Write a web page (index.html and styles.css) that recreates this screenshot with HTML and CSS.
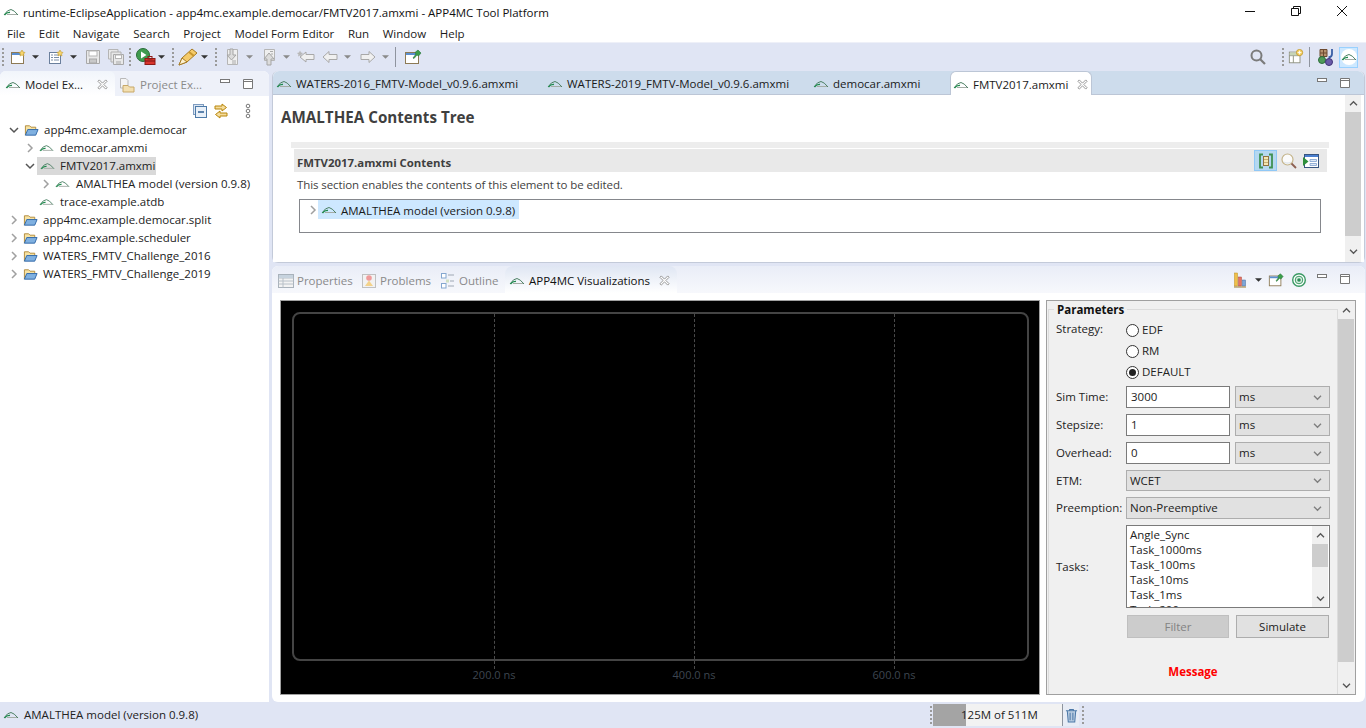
FILE: index.html
```html
<!DOCTYPE html>
<html lang="en">
<head>
<meta charset="utf-8">
<title>APP4MC Tool Platform</title>
<link rel="stylesheet" href="styles.css">
</head>
<body>
<svg class="defs" width="0" height="0" aria-hidden="true">
  <symbol id="amalthea" viewBox="0 0 16 16">
    <path d="M1 11 Q4.500 5.500 8 5.500 Q11 6 15 11" fill="none" stroke="#4c8064" stroke-width="1"/>
    <path d="M1.500 11 Q4 8 7 8.500" fill="none" stroke="#1f8a4d" stroke-width="1.300"/>
    <path d="M4 10.500 H14" stroke="#a4aca6" stroke-width="1"/>
  </symbol>
  <symbol id="folder" viewBox="0 0 16 16">
    <path d="M1.500 13.500 V3.500 H6 L7.500 5 H12.500 V7" fill="#f7e3a3" stroke="#b08a3c"/>
    <path d="M1.500 13.500 L4 7.500 H15 L12.500 13.500 Z" fill="#7fb0e0" stroke="#2f66a8"/>
  </symbol>
  <symbol id="close" viewBox="0 0 12 12">
    <path d="M2.500 1 L6 4.500 L9.500 1 L11 2.500 L7.500 6 L11 9.500 L9.500 11 L6 7.500 L2.500 11 L1 9.500 L4.500 6 L1 2.500 Z" fill="#fff" stroke="#8f8f8f" stroke-width="1"/>
  </symbol>
  <symbol id="chev-r" viewBox="0 0 8 10">
    <path d="M2 1 L6 5 L2 9" fill="none" stroke="#a0a0a0" stroke-width="1.500"/>
  </symbol>
  <symbol id="chev-d" viewBox="0 0 10 8">
    <path d="M1 2 L5 6 L9 2" fill="none" stroke="#555" stroke-width="1.500"/>
  </symbol>
  <symbol id="drop" viewBox="0 0 8 4">
    <path d="M0 0 H8 L4 4 Z" fill="#333"/>
  </symbol>
  <symbol id="drop-g" viewBox="0 0 8 4">
    <path d="M0 0 H8 L4 4 Z" fill="#8a8a8a"/>
  </symbol>
  <symbol id="min" viewBox="0 0 12 12"><rect x="1.500" y="1.500" width="9" height="3" fill="#fff" stroke="#777"/></symbol>
  <symbol id="max" viewBox="0 0 12 12"><path d="M1.500 1.500 H10.500 V10.500 H1.500 Z M1.500 3.500 H10.500" fill="#fff" stroke="#777"/></symbol>
  <symbol id="newwin" viewBox="0 0 16 16">
    <rect x="1.500" y="3.500" width="12" height="11" fill="#fff" stroke="#8d7a55"/><rect x="2" y="4" width="11" height="2" fill="#5b8fd0"/>
    <path d="M12 1 L13 3 L15 3.500 L13.500 5 L14 7 L12 6 L10 7 L10.500 5 L9 3.500 L11 3 Z" fill="#f7d56c" stroke="#c39a2c" stroke-width=".6"/>
  </symbol>
  <symbol id="newfile" viewBox="0 0 16 16">
    <rect x="1.500" y="3.500" width="11" height="11" fill="#fff" stroke="#6a7f9c"/><path d="M3 6 H5 M6 6 H11 M3 8.500 H5 M6 8.500 H11 M3 11 H5 M6 11 H11" stroke="#7a8ea8"/>
    <path d="M12 1 L13 3 L15 3.500 L13.500 5 L14 7 L12 6 L10 7 L10.500 5 L9 3.500 L11 3 Z" fill="#f7d56c" stroke="#c39a2c" stroke-width=".6"/>
  </symbol>
  <symbol id="save" viewBox="0 0 16 16">
    <path d="M1.500 1.500 H14.500 V14.500 H1.500 Z" fill="#e8e8e8" stroke="#a8a8a8"/><rect x="4" y="2" width="8" height="5" fill="#fff" stroke="#b5b5b5"/><rect x="4.500" y="10" width="7" height="4" fill="#c8c8c8" stroke="#a8a8a8"/>
  </symbol>
  <symbol id="saveall" viewBox="0 0 16 16">
    <path d="M.5 .5 H10 V10 H.5 Z" fill="#e8e8e8" stroke="#b5b5b5"/><path d="M3 3 H13 V13 H3 Z" fill="#e8e8e8" stroke="#b0b0b0"/><path d="M5.500 5.500 H15.500 V15.500 H5.500 Z" fill="#e8e8e8" stroke="#a8a8a8"/><rect x="7.500" y="6" width="6" height="3.500" fill="#fff" stroke="#b5b5b5"/><rect x="8" y="12" width="5" height="3" fill="#c8c8c8"/>
  </symbol>
  <symbol id="run" viewBox="0 0 20 18">
    <circle cx="7" cy="7" r="6.500" fill="#3f9b4f" stroke="#2c6d3a"/><path d="M5 3.500 L10.500 7 L5 10.500 Z" fill="#fff"/>
    <rect x="9" y="10.500" width="10" height="6" fill="#d8342c" stroke="#8e1a16"/><rect x="12" y="8.500" width="4" height="2.500" fill="none" stroke="#8e1a16"/><path d="M9 13 H19" stroke="#7c1512"/>
  </symbol>
  <symbol id="pen" viewBox="0 0 20 18">
    <path d="M1 17 L4 10 L14 1 L19 5 L9 14 Z" fill="#f5cb6a" stroke="#a67b25"/><path d="M1 17 L4 10 L9 14 Z" fill="#fdf1cf" stroke="#a67b25"/><path d="M11 4 L16 8" stroke="#c9972e" stroke-width="2"/>
  </symbol>
  <symbol id="nextann" viewBox="0 0 16 18">
    <path d="M3.500 1.500 H13.500 V16.500 H3.500 Z" fill="#efefef" stroke="#b5b5b5"/><path d="M6 1 H9 V7 H12 L7.500 12 L3 7 H6 Z" fill="#dcdcdc" stroke="#a5a5a5"/><path d="M8 13 H12 M8 15 H12" stroke="#aaa"/>
  </symbol>
  <symbol id="prevann" viewBox="0 0 16 18">
    <path d="M3.500 1.500 H13.500 V12.500 H3.500 Z" fill="#efefef" stroke="#b5b5b5"/><path d="M6 17 H10 V11 H13 L8 5 L3 11 H6 Z" fill="#dcdcdc" stroke="#a5a5a5"/><path d="M9 3.500 H12 M10 6 H12" stroke="#aaa"/>
  </symbol>
  <symbol id="arrow-l" viewBox="0 0 16 14">
    <path d="M1 7 L7 1.500 V4.500 H15 V9.500 H7 V12.500 Z" fill="#f0f0f0" stroke="#a8a8a8"/>
  </symbol>
  <symbol id="arrow-r" viewBox="0 0 16 14">
    <path d="M15 7 L9 1.500 V4.500 H1 V9.500 H9 V12.500 Z" fill="#f0f0f0" stroke="#a8a8a8"/>
  </symbol>
  <symbol id="lastedit" viewBox="0 0 18 14">
    <path d="M3 7 L9 2 V4.500 H17 V9.500 H9 V12 Z" fill="#f0f0f0" stroke="#a8a8a8"/><path d="M3 .5 L4 2.500 L6 3 L4.500 4.500 L5 6.500 L3 5.500 L1 6.500 L1.500 4.500 L0 3 L2 2.500 Z" fill="#b8b8b8"/>
  </symbol>
  <symbol id="pin" viewBox="0 0 18 16">
    <rect x="1.500" y="3.500" width="13" height="11" fill="#fff" stroke="#8d7a55"/><rect x="2" y="4" width="12" height="2" fill="#5b8fd0"/>
    <path d="M9 9 L12 5 L11 3.500 L14 1 L17 4 L14.500 7 L13 6 L10 9.500 Z" fill="#3b9e4a" stroke="#27733a" stroke-width=".6"/>
  </symbol>
  <symbol id="search" viewBox="0 0 16 16">
    <circle cx="6.500" cy="6.500" r="5" fill="none" stroke="#7b7b7b" stroke-width="2"/><path d="M10 10 L15 15" stroke="#7b7b7b" stroke-width="2.200"/>
  </symbol>
  <symbol id="persp" viewBox="0 0 18 18">
    <rect x="1.500" y="3.500" width="12" height="12" fill="#fff" stroke="#8a8d7b"/><path d="M1.500 7.500 H13.500 M6 7.500 V15.500" stroke="#8a8d7b"/><rect x="2" y="4" width="11" height="3" fill="#c6d4b6"/>
    <circle cx="13" cy="4" r="3.500" fill="#f7d56c" stroke="#c39a2c"/><path d="M11 4 H15 M13 2 V6" stroke="#fff"/>
  </symbol>
  <symbol id="java" viewBox="0 0 18 18">
    <path d="M2 1.500 H9 V8.500 H2 Z M2 5 H9 M5.500 1.500 V8.500" fill="#b6926e" stroke="#6d4a30"/>
    <path d="M14 1 V6 Q14 9 10.500 9.500" fill="none" stroke="#3a5ea6" stroke-width="1.800"/>
    <circle cx="4" cy="12" r="3.500" fill="#4f9a59" stroke="#2c6d3a"/><circle cx="11" cy="14" r="3.500" fill="#6a5aa8" stroke="#403375"/>
  </symbol>
  <symbol id="collapse" viewBox="0 0 16 16">
    <rect x="1.500" y="1.500" width="10" height="10" fill="#dce6f2" stroke="#7e9cc0"/><rect x="3.500" y="3.500" width="11" height="11" fill="#e9f0f8" stroke="#4d7aa8"/><path d="M6 9 H12" stroke="#2d5f94" stroke-width="1.500"/>
  </symbol>
  <symbol id="link" viewBox="0 0 16 16">
    <path d="M9 1 L13.500 4.500 L9 8 V6 H2 V3 H9 Z" fill="#f5dc9c" stroke="#b8860b"/><path d="M7 8 L2.500 11.500 L7 15 V13 H14 V10 H7 Z" fill="#f5dc9c" stroke="#b8860b"/>
  </symbol>
  <symbol id="vdots" viewBox="0 0 6 16">
    <circle cx="3" cy="3" r="1.800" fill="#fff" stroke="#777"/><circle cx="3" cy="8" r="1.800" fill="#fff" stroke="#777"/><circle cx="3" cy="13" r="1.800" fill="#fff" stroke="#777"/>
  </symbol>
  <symbol id="pexp" viewBox="0 0 16 16">
    <path d="M1.500 1.500 H7 L9 3.500 V11 H1.500 Z" fill="#f4f4f4" stroke="#b9b9b9"/><path d="M4 8.500 H9 L10.500 10 H15 V15 H4 Z" fill="#f3dfb0" stroke="#c7a868"/>
  </symbol>
  <symbol id="props" viewBox="0 0 16 14">
    <rect x=".5" y=".5" width="15" height="13" fill="#f3f3f3" stroke="#a9b2bb"/><path d="M.5 4 H15.500 M.5 7 H15.500 M.5 10 H15.500 M5 4 V13.500" stroke="#b8c0c8"/><rect x="1" y="1" width="14" height="3" fill="#c7d3de"/>
  </symbol>
  <symbol id="problems" viewBox="0 0 16 16">
    <rect x="1.500" y="1.500" width="13" height="13" fill="#f2f2f2" stroke="#c0c0c0"/><circle cx="8" cy="5" r="2.800" fill="#ef9a9a"/><path d="M4 13 L8 7.500 L12 13 Z" fill="#f3d28a"/>
  </symbol>
  <symbol id="outline" viewBox="0 0 14 16">
    <rect x=".5" y=".5" width="4.500" height="4.500" fill="#fff" stroke="#84a7cf"/><rect x=".5" y="10.500" width="4.500" height="4.500" fill="#fff" stroke="#84a7cf"/><path d="M7 2 H13 M9 8 H13 M7 13 H13" stroke="#9fa8b4"/><rect x="5" y="6.500" width="3" height="3" fill="#cfe0c2"/>
  </symbol>
  <symbol id="chart" viewBox="0 0 13 16">
    <rect x=".5" y="1" width="3" height="13" fill="#f0c04a" stroke="#b98d1f" stroke-width=".5"/><rect x="4.500" y="5" width="3" height="9" fill="#e57364" stroke="#a9483c" stroke-width=".5"/><rect x="8.500" y="8" width="3" height="6" fill="#7ea6d8" stroke="#44689a" stroke-width=".5"/><path d="M0 15 H12" stroke="#9a7a30"/>
  </symbol>
  <symbol id="target" viewBox="0 0 14 14">
    <circle cx="7" cy="7" r="6.300" fill="#fff" stroke="#3a9a64" stroke-width="1.400"/><circle cx="7" cy="7" r="3.800" fill="#d6efdf" stroke="#3a9a64"/><circle cx="7" cy="7" r="1.800" fill="#2e8b57"/>
  </symbol>
  <symbol id="bracket" viewBox="0 0 16 16">
    <path d="M5 1.500 H2 V14.500 H5 M11 1.500 H14 V14.500 H11" fill="none" stroke="#3f9152" stroke-width="1.800"/><rect x="5.500" y="3.500" width="5" height="9" fill="#f4e6b0" stroke="#8d7340"/><path d="M6 6.500 H10 M6 9.500 H10" stroke="#c3b078"/>
  </symbol>
  <symbol id="glass" viewBox="0 0 16 16">
    <circle cx="6.500" cy="6.500" r="5.500" fill="#fbfbfb" stroke="#c4b48a" stroke-width="1.200"/><path d="M2 8 Q6.500 11 11 8 A5 5 0 0 1 2 8" fill="#dbe2e8"/><path d="M10.500 10.500 L15 15" stroke="#8c5f50" stroke-width="1.800"/>
  </symbol>
  <symbol id="viewform" viewBox="0 0 16 16">
    <rect x="1.500" y="1.500" width="14" height="13" fill="#fff" stroke="#38557f"/><rect x="2" y="2" width="13" height="2" fill="#4a7fd0"/><path d="M7 6.500 H13.500 V8.500 H7 Z M7 10.500 H13.500 V12.500 H7 Z" fill="#dfe9f6" stroke="#7d9fce" stroke-width=".8"/><path d="M0 4 L5.500 8.500 L0 13 Z" fill="#2f8f3a"/>
  </symbol>
  <symbol id="trash" viewBox="0 0 14 16">
    <path d="M1 3 H13 M5 3 V1.500 H9 V3 M2.500 3.500 L3.500 15 H10.500 L11.500 3.500 M5.500 5 V13 M8.500 5 V13" fill="#b8cbe0" stroke="#4b78a8" stroke-width="1.100"/>
  </symbol>
</svg>

<div class="window">
  <header class="titlebar">
    <svg class="ic16 title-ic"><use href="#amalthea"/></svg>
    <span class="title-text">runtime-EclipseApplication - app4mc.example.democar/FMTV2017.amxmi - APP4MC Tool Platform</span>
    <div class="winctl">
      <svg class="wc" viewBox="0 0 12 12"><path d="M1 6.500 H11" stroke="#111"/></svg>
      <svg class="wc" viewBox="0 0 12 12"><path d="M1.500 3.500 H8.500 V10.500 H1.500 Z M3.500 3.500 V1.500 H10.500 V8.500 H8.500" fill="none" stroke="#111"/></svg>
      <svg class="wc" viewBox="0 0 12 12"><path d="M1 1 L11 11 M11 1 L1 11" stroke="#111"/></svg>
    </div>
  </header>

  <nav class="menubar">
    <span>File</span><span>Edit</span><span>Navigate</span><span>Search</span><span>Project</span><span>Model Form Editor</span><span>Run</span><span>Window</span><span>Help</span>
  </nav>

  <div class="toolbar">
    <i class="grip g1"></i>
    <svg class="ti i-new"><use href="#newwin"/></svg><svg class="dd d1"><use href="#drop"/></svg>
    <svg class="ti i-file"><use href="#newfile"/></svg><svg class="dd d1"><use href="#drop"/></svg>
    <svg class="ti i-save"><use href="#save"/></svg>
    <svg class="ti i-saveall"><use href="#saveall"/></svg>
    <i class="grip g2"></i>
    <svg class="ti i-run"><use href="#run"/></svg><svg class="dd d2"><use href="#drop"/></svg>
    <i class="grip g3"></i>
    <svg class="ti i-pen"><use href="#pen"/></svg><svg class="dd d3"><use href="#drop"/></svg>
    <i class="grip g3"></i>
    <svg class="ti i-next"><use href="#nextann"/></svg><svg class="dd d4"><use href="#drop-g"/></svg>
    <svg class="ti i-prev"><use href="#prevann"/></svg><svg class="dd d4"><use href="#drop-g"/></svg>
    <svg class="ti i-last"><use href="#lastedit"/></svg>
    <svg class="ti i-back"><use href="#arrow-l"/></svg><svg class="dd d4"><use href="#drop-g"/></svg>
    <svg class="ti i-fwd"><use href="#arrow-r"/></svg><svg class="dd d4"><use href="#drop-g"/></svg>
    <i class="vsep s1"></i>
    <svg class="ti i-pin"><use href="#pin"/></svg>
    <div class="tb-right">
      <svg class="ti r-search"><use href="#search"/></svg>
      <i class="grip g4"></i>
      <svg class="ti r-persp"><use href="#persp"/></svg>
      <i class="vsep s2"></i>
      <svg class="ti r-java"><use href="#java"/></svg>
      <span class="persp-on"><svg class="ic16"><use href="#amalthea"/></svg></span>
    </div>
  </div>

  <main class="workbench">
    <section class="part left">
      <div class="tabs tabs-left">
        <div class="tab active mx"><svg class="ic16"><use href="#amalthea"/></svg><span>Model Ex...</span><svg class="x"><use href="#close"/></svg></div>
        <div class="tab off px"><svg class="ic16"><use href="#pexp"/></svg><span>Project Ex...</span></div>
        <div class="part-ctl"><svg class="pc"><use href="#min"/></svg><svg class="pc"><use href="#max"/></svg></div>
      </div>
      <div class="part-body">
        <div class="view-tools">
          <svg class="ic16"><use href="#collapse"/></svg>
          <svg class="ic16"><use href="#link"/></svg>
          <svg class="vd"><use href="#vdots"/></svg>
        </div>
        <ul class="tree">
          <li class="row l1"><svg class="cd"><use href="#chev-d"/></svg><svg class="ic-f"><use href="#folder"/></svg><span>app4mc.example.democar</span></li>
          <li class="row l2"><svg class="cr"><use href="#chev-r"/></svg><svg class="ic-f"><use href="#amalthea"/></svg><span>democar.amxmi</span></li>
          <li class="row l2"><svg class="cd"><use href="#chev-d"/></svg><span class="sel"><svg class="ic-f"><use href="#amalthea"/></svg><span>FMTV2017.amxmi</span></span></li>
          <li class="row l3"><svg class="cr"><use href="#chev-r"/></svg><svg class="ic-f"><use href="#amalthea"/></svg><span>AMALTHEA model (version 0.9.8)</span></li>
          <li class="row l2"><i class="nochev"></i><svg class="ic-f"><use href="#amalthea"/></svg><span>trace-example.atdb</span></li>
          <li class="row l1"><svg class="cr"><use href="#chev-r"/></svg><svg class="ic-f"><use href="#folder"/></svg><span>app4mc.example.democar.split</span></li>
          <li class="row l1"><svg class="cr"><use href="#chev-r"/></svg><svg class="ic-f"><use href="#folder"/></svg><span>app4mc.example.scheduler</span></li>
          <li class="row l1"><svg class="cr"><use href="#chev-r"/></svg><svg class="ic-f"><use href="#folder"/></svg><span>WATERS_FMTV_Challenge_2016</span></li>
          <li class="row l1"><svg class="cr"><use href="#chev-r"/></svg><svg class="ic-f"><use href="#folder"/></svg><span>WATERS_FMTV_Challenge_2019</span></li>
        </ul>
      </div>
    </section>

    <div class="right">
      <section class="part editor">
        <div class="tabs tabs-ed">
          <div class="tab et1"><svg class="ic16"><use href="#amalthea"/></svg><span>WATERS-2016_FMTV-Model_v0.9.6.amxmi</span></div>
          <div class="tab et2"><svg class="ic16"><use href="#amalthea"/></svg><span>WATERS-2019_FMTV-Model_v0.9.6.amxmi</span></div>
          <div class="tab et3"><svg class="ic16"><use href="#amalthea"/></svg><span>democar.amxmi</span></div>
          <div class="tab active et4"><svg class="ic16"><use href="#amalthea"/></svg><span>FMTV2017.amxmi</span><svg class="x"><use href="#close"/></svg></div>
          <div class="part-ctl"><svg class="pc"><use href="#min"/></svg><svg class="pc"><use href="#max"/></svg></div>
        </div>
        <div class="ed-body">
          <div class="form">
            <h1 class="form-title">AMALTHEA Contents Tree</h1>
            <div class="section">
              <div class="sec-strip"></div>
              <div class="sec-head">
                <span class="sec-title">FMTV2017.amxmi Contents</span>
                <div class="sec-tools">
                  <span class="tool-on"><svg class="ic16"><use href="#bracket"/></svg></span>
                  <svg class="ic16"><use href="#glass"/></svg>
                  <svg class="ic16"><use href="#viewform"/></svg>
                </div>
              </div>
              <p class="sec-desc">This section enables the contents of this element to be edited.</p>
              <div class="tree-box">
                <svg class="cr"><use href="#chev-r"/></svg>
                <span class="sel-blue"><svg class="ic16"><use href="#amalthea"/></svg><span class="sel-label">AMALTHEA model (version 0.9.8)</span></span>
              </div>
            </div>
          </div>
          <div class="sb sb-ed">
            <span class="sb-btn"><svg class="sb-ch up"><use href="#chev-d"/></svg></span>
            <span class="sb-thumb"></span>
            <span class="sb-btn"><svg class="sb-ch"><use href="#chev-d"/></svg></span>
          </div>
        </div>
      </section>

      <section class="part viz">
        <div class="tabs tabs-viz">
          <div class="tab off vt1"><svg class="ic16"><use href="#props"/></svg><span>Properties</span></div>
          <div class="tab off vt2"><svg class="ic16"><use href="#problems"/></svg><span>Problems</span></div>
          <div class="tab off vt3"><svg class="ic16"><use href="#outline"/></svg><span>Outline</span></div>
          <div class="tab active vt4"><svg class="ic16"><use href="#amalthea"/></svg><span>APP4MC Visualizations</span><svg class="x"><use href="#close"/></svg></div>
          <div class="viz-tools">
            <svg class="v-chart"><use href="#chart"/></svg><svg class="dd d8"><use href="#drop"/></svg>
            <svg class="ic16 vt-pin"><use href="#pin"/></svg>
            <svg class="ic16 vt-tg"><use href="#target"/></svg>
            <svg class="pc"><use href="#min"/></svg><svg class="pc"><use href="#max"/></svg>
          </div>
        </div>
        <div class="viz-body">
          <div class="chart">
            <div class="plot">
              <i class="gridline"></i><i class="gridline"></i><i class="gridline"></i>
            </div>
            <div class="axis"><span>200.0 ns</span><span>400.0 ns</span><span>600.0 ns</span></div>
          </div>
          <div class="params">
            <div class="group">
              <div class="legend"><span>Parameters</span></div>
              <div class="p-grid">
                <span class="lab lab-s">Strategy:</span>
                <div class="radios">
                  <label class="radio"><i class="dot"></i>EDF</label>
                  <label class="radio"><i class="dot"></i>RM</label>
                  <label class="radio"><i class="dot on"></i>DEFAULT</label>
                </div>
                <span class="lab">Sim Time:</span><div class="pair"><span class="inp">3000</span><span class="combo">ms<svg class="cchev"><use href="#chev-d"/></svg></span></div>
                <span class="lab">Stepsize:</span><div class="pair"><span class="inp">1</span><span class="combo">ms<svg class="cchev"><use href="#chev-d"/></svg></span></div>
                <span class="lab">Overhead:</span><div class="pair"><span class="inp">0</span><span class="combo">ms<svg class="cchev"><use href="#chev-d"/></svg></span></div>
                <span class="lab">ETM:</span><span class="combo c-etm">WCET<svg class="cchev"><use href="#chev-d"/></svg></span>
                <span class="lab">Preemption:</span><span class="combo">Non-Preemptive<svg class="cchev"><use href="#chev-d"/></svg></span>
                <span class="lab">Tasks:</span>
                <div class="list">
                  <div class="list-items"><div>Angle_Sync</div><div>Task_1000ms</div><div>Task_100ms</div><div>Task_10ms</div><div>Task_1ms</div><div>Task_200ms</div></div>
                  <div class="sb sb-list">
                    <span class="sb-btn"><svg class="sb-ch up"><use href="#chev-d"/></svg></span>
                    <span class="sb-thumb"></span>
                    <span class="sb-btn"><svg class="sb-ch"><use href="#chev-d"/></svg></span>
                  </div>
                </div>
                <span></span>
                <div class="btns"><span class="btn dis">Filter</span><span class="btn">Simulate</span></div>
              </div>
              <div class="message">Message</div>
            </div>
            <div class="sb sb-par">
              <span class="sb-btn"><svg class="sb-ch up"><use href="#chev-d"/></svg></span>
              <span class="sb-thumb"></span>
              <span class="sb-btn"><svg class="sb-ch"><use href="#chev-d"/></svg></span>
            </div>
          </div>
        </div>
      </section>
    </div>
  </main>

  <footer class="status">
    <svg class="ic16"><use href="#amalthea"/></svg>
    <span class="st-text">AMALTHEA model (version 0.9.8)</span>
    <div class="st-right">
      <i class="grip g5"></i>
      <div class="heap"><div class="heap-used"></div><span class="heap-label">125M of 511M</span></div>
      <span class="gc"><svg class="tr"><use href="#trash"/></svg></span>
      <i class="grip g5 g6"></i>
    </div>
  </footer>
</div>
</body>
</html>
```
FILE: styles.css
```css
* { box-sizing: border-box; }
html, body { margin: 0; height: 100%; }
body { font: 11.500px/16px "Open Sans", "Liberation Sans", sans-serif; color: #1a1a1a; background: #e0e5f4; overflow: hidden; }
.defs { position: absolute; }
svg { display: block; flex: none; }
.window { width: 1366px; height: 728px; display: flex; flex-direction: column; }
.ic16 { width: 16px; height: 16px; }

.titlebar { height: 23px; background: #fff; display: flex; align-items: center; padding-left: 3px; }
.title-ic { margin-right: 4px; margin-top: 2px; }
.title-text { color: #111; padding-top: 3px; }
.winctl { margin-left: auto; display: flex; align-items: center; padding-right: 18px; gap: 34px; }
.wc { width: 12px; height: 12px; }

.menubar { height: 19px; background: #fff; display: flex; padding: 3px 0 0 7px; gap: 13.600px; align-items: center; }

.toolbar { height: 30px; display: flex; align-items: center; background: #e0e5f4; border-top: 1px solid #eef0f8; padding-right: 8px; }
.grip { width: 2px; height: 18px; background-image: linear-gradient(#9a9a9a 50%, transparent 50%); background-size: 2px 4px; flex: none; }
.g1 { margin-left: 2px; }
.g2 { margin-left: 5px; }
.g3 { margin-left: 7px; }
.ti { width: 16px; height: 16px; }
.dd { width: 7px; height: 4px; }
.i-new { margin-left: 6px; }
.d1 { margin-left: 6px; }
.i-file { margin-left: 9px; }
.i-save { margin-left: 8px; }
.i-saveall { margin-left: 7px; }
.i-run { margin-left: 5px; width: 20px; height: 18px; }
.d2 { margin-left: 2px; }
.i-pen { margin-left: 4px; width: 20px; height: 18px; }
.d3 { margin-left: 3px; }
.i-next { margin-left: 7px; height: 18px; }
.d4 { margin-left: 6px; }
.i-prev { margin-left: 8px; height: 18px; }
.i-last { margin-left: 7px; width: 18px; height: 14px; }
.i-back { margin-left: 7px; height: 14px; }
.i-fwd { margin-left: 9px; height: 14px; }
.vsep { width: 1px; height: 20px; background: #8f949f; flex: none; }
.s1 { margin-left: 6px; }
.i-pin { margin-left: 8px; width: 18px; }
.tb-right { margin-left: auto; display: flex; align-items: center; }
.r-search { margin-right: 16px; }
.g4 { margin-right: 4px; }
.s2 { margin: 0 8px 0 5px; }
.r-java { width: 18px; height: 18px; margin-right: 3px; }
.persp-on { width: 19px; height: 21px; background: #cde8ff; border: 1px solid #99d1ff; display: flex; align-items: center; justify-content: center; }
.persp-on .ic16 { background: #fff; border-radius: 50%; }

.workbench { height: 631px; display: grid; grid-template-columns: 269px 1fr; column-gap: 3px; padding-right: 1px; }
.part { display: flex; flex-direction: column; min-height: 0; min-width: 0; }
.tabs { height: 25px; display: flex; align-items: stretch; flex: none; }
.tab { display: flex; align-items: center; white-space: nowrap; padding-top: 2px; }
.tab.off { color: #8a8a8a; }
.tab.active { background: linear-gradient(#f1f5fb, #fff); border-radius: 6px 6px 0 0; }
.x { width: 11px; height: 11px; }
.part-ctl { margin-left: auto; display: flex; align-items: center; gap: 11px; padding: 1px 13px 0 0; }
.pc { width: 12px; height: 12px; }

.left { background: #fff; border-radius: 6px 6px 0 0; }
.tabs-left { background: #eef1f9; border-radius: 6px 6px 0 0; }
.tabs-left .part-ctl { padding-right: 15px; }
.mx { width: 115px; padding-left: 5px; gap: 4px; }
.mx .x { margin-left: auto; margin-right: 7px; }
.px { padding-left: 4px; gap: 5px; }
.part-body { flex: 1; background: #fff; padding-top: 5px; }
.view-tools { height: 20px; display: flex; align-items: center; padding-left: 192px; gap: 5px; }
.vd { width: 6px; height: 16px; margin-left: 11px; }
.tree { list-style: none; margin: 0; padding: 0; }
.row { height: 18px; display: flex; align-items: center; white-space: nowrap; color: #222; }
.l1 { padding-left: 9px; }
.l2 { padding-left: 25px; }
.l3 { padding-left: 41px; }
.cr { width: 8px; height: 10px; margin-left: 1px; margin-right: 5px; }
.cd { width: 10px; height: 8px; margin-right: 5px; }
.nochev { width: 14px; flex: none; }
.row .ic-f { width: 15px; height: 16px; margin-right: 5px; }
.l2 .ic-f, .l3 .ic-f { margin-right: 6px; }
.row .sel .ic-f { margin-right: 5px; }
.sel { display: flex; align-items: center; background: #d9d9d9; height: 18px; margin-left: -3px; padding: 0 1px 0 3px; }

.right { display: grid; grid-template-rows: 192px 436px; row-gap: 3px; min-width: 0; }
.editor { background: #fff; border: 1px solid #c3cad9; border-top: 0; border-radius: 6px; }
.tabs-ed { height: 24px; background: #cddcec; border-radius: 6px 6px 0 0; border-bottom: 1px solid #bcc6d6; }
.et1 { width: 271px; padding-left: 3px; gap: 4px; }
.et2 { width: 266px; padding-left: 3px; gap: 4px; }
.et3 { width: 140px; padding-left: 3px; gap: 4px; }
.tab.et4 { width: 142px; padding-left: 2px; gap: 4px; border: 1px solid #bcc6d6; border-bottom: 0; background: #fff; height: 24px; }
.et4 .x { margin-left: 5px; }
.ed-body { flex: 1; display: flex; min-height: 0; background: #fff; }
.form { flex: 1; min-width: 0; padding: 11px 16px 0 8px; }
.form-title { margin: 0; font-size: 15.200px; line-height: 22px; font-weight: 700; color: #3f3f3f; }
.section { margin-top: 14px; margin-left: 10px; }
.sec-strip { height: 6px; background: #ededed; }
.sec-head { height: 23px; margin: 1px 2px 0 3px; background: #e9e9e9; display: flex; align-items: center; padding-left: 3px; }
.sec-title { font-weight: 700; font-size: 11.400px; color: #3f3f3f; padding-top: 5px; }
.sec-tools { margin-left: auto; display: flex; align-items: center; gap: 6px; padding-right: 8px; }
.tool-on { width: 23px; height: 21px; background: #b5d8f0; border: 1px solid #90c8f6; display: flex; align-items: center; justify-content: center; margin-right: -2px; }
.sec-desc { margin: 0; height: 27px; padding: 4px 0 0 6px; line-height: 18px; color: #3f3f3f; letter-spacing: -.1px; }
.tree-box { height: 34px; margin: 0 8px; border: 1px solid #85878c; display: flex; align-items: flex-start; padding: 0 0 0 8px; }
.tree-box .cr { margin: 5px 1px 0 1px; }
.sel-blue { display: flex; align-items: center; gap: 4px; height: 19px; width: 201px; background: #cde8ff; padding-left: 3px; white-space: nowrap; }
.sel-label { padding-top: 2px; }

.sb { display: flex; flex-direction: column; flex: none; background: #f0f0f0; }
.sb-btn { height: 17px; display: flex; align-items: center; justify-content: center; flex: none; }
.sb-thumb { background: #cdcdcd; display: block; }
.sb-ch { width: 9px; height: 7px; }
.sb-ch.up { transform: scaleY(-1); }
.sb-ed { width: 16px; margin: 0 3px 0 0; }
.sb-ed .sb-thumb { height: 124px; }
.sb-ed .sb-btn:last-child { margin-top: auto; height: 22px; }

.viz { background: #fff; border-radius: 6px; }
.tabs-viz { height: 27px; background: linear-gradient(#e9edf7, #f7f8fc); border-radius: 6px 6px 0 0; }
.vt1 { width: 83px; padding-left: 6px; gap: 3px; }
.vt2 { width: 81px; padding-left: 6px; gap: 3px; }
.vt3 { width: 69px; padding-left: 4px; gap: 3px; }
.tab.vt4 { width: 172px; padding-left: 4px; gap: 4px; background: linear-gradient(#dfe6f3, #fff); color: #111; border-radius: 8px 8px 0 0; }
.vt4 .x { margin-left: 5px; }
.viz-tools { margin-left: auto; display: flex; align-items: center; padding-right: 14px; }
.v-chart { width: 13px; height: 16px; }
.d8 { margin-left: 8px; }
.vt-pin { margin-left: 6px; }
.vt-tg { margin-left: 8px; width: 14px; height: 14px; }
.viz-tools .pc { margin: 0 0 2px 11px; }
.viz-tools .vt-tg + .pc { margin-left: 10px; }
.viz-body { flex: 1; display: flex; padding: 7px 9px 7px 8px; gap: 6px; min-height: 0; }
.chart { width: 760px; border: 1px solid #a0a0a0; background: #000; padding: 11px 10px 0 11px; display: flex; flex-direction: column; }
.plot { height: 349px; border: 2px solid #444; border-radius: 8px; display: flex; padding-left: 200px; gap: 199px; flex: none; }
.gridline { width: 1px; height: 355px; border-left: 1px dashed #4a4a4a; flex: none; }
.axis { display: flex; color: #3e4650; padding-left: 102px; margin-top: 6px; font-size: 11px; }
.axis span { width: 200px; text-align: center; flex: none; }
.params { width: 310px; border: 1px solid #a0a0a0; background: #f0f0f0; display: flex; }
.group { flex: 1; min-width: 0; padding: 0 1px 0 2px; position: relative; }
.group::before { content: ""; position: absolute; left: 1px; right: 0; top: 8px; bottom: 0; border: 1px solid #dcdcdc; border-bottom: 0; }
.legend { height: 17px; position: relative; display: flex; align-items: center; }
.legend span { background: #f0f0f0; margin-left: 5px; padding: 0 3px; font-weight: 700; color: #111; }
.p-grid { display: grid; grid-template-columns: 70px 204px; row-gap: 6px; padding-left: 7px; align-items: center; color: #222; position: relative; }
.lab { white-space: nowrap; }
.lab-s { align-self: start; padding-top: 3px; }
.radios { display: flex; flex-direction: column; margin-top: 1px; height: 61px; }
.radio { height: 21px; display: flex; align-items: center; gap: 3px; flex: none; padding-top: 1px; }
.dot { width: 13px; height: 13px; border: 1px solid #333; border-radius: 50%; background: #fff; position: relative; flex: none; }
.dot.on::after { content: ""; position: absolute; left: 2px; top: 2px; width: 7px; height: 7px; border-radius: 50%; background: #222; }
.pair { display: grid; grid-template-columns: 104px 95px; column-gap: 5px; }
.inp { height: 22px; border: 1px solid #7a7a7a; background: #fff; padding: 2px 4px; }
.combo { height: 22px; border: 1px solid #adadad; background: #e1e1e1; padding: 0 3px; display: flex; align-items: center; justify-content: space-between; color: #222; }
.c-etm { height: 21px; }
.cchev { width: 9px; height: 7px; margin-right: 4px; opacity: .7; }
.list { height: 83px; border: 1px solid #7a7a7a; background: #fff; display: flex; overflow: hidden; }
.list-items { flex: 1; padding: 1px 3px 0; line-height: 15px; overflow: hidden; }
.sb-list { width: 16px; margin: 0 1px 0 0; }
.sb-list .sb-thumb { height: 23px; }
.sb-list .sb-btn { height: 18px; }
.sb-list .sb-btn:last-child { margin-top: auto; }
.btns { display: grid; grid-template-columns: 102px 93px; column-gap: 7px; padding-left: 1px; margin-top: 1px; }
.btn { height: 23px; border: 1px solid #adadad; background: #e1e1e1; display: flex; align-items: center; justify-content: center; color: #222; }
.btn.dis { background: #ccc; color: #838383; border-color: #bfbfbf; }
.message { color: #f00; font-weight: 700; text-align: center; margin-top: 26px; position: relative; }
.sb-par { width: 16px; margin-right: 1px; }
.sb-par .sb-thumb { height: 343px; }
.sb-par .sb-btn { height: 18px; }
.sb-par .sb-btn:last-child { margin-top: auto; }

.status { height: 26px; display: flex; align-items: center; padding-left: 3px; background: #e0e5f4; }
.st-text { margin-left: 5px; color: #222; }
.st-right { margin-left: auto; display: flex; align-items: center; margin-right: 282px; }
.g5 { height: 18px; }
.g6 { margin-left: 3px; }
.heap { margin-left: 1px; width: 129px; height: 22px; background: #f2f2f2; position: relative; display: flex; align-items: center; }
.heap-used { width: 33px; height: 22px; background: #a4a4a4; }
.heap-label { position: absolute; left: 28px; white-space: nowrap; color: #222; }
.gc { width: 17px; height: 22px; background: #e7ecf5; border-left: 1px solid #8d949f; display: flex; align-items: center; justify-content: center; }
.tr { width: 13px; height: 15px; }
```
